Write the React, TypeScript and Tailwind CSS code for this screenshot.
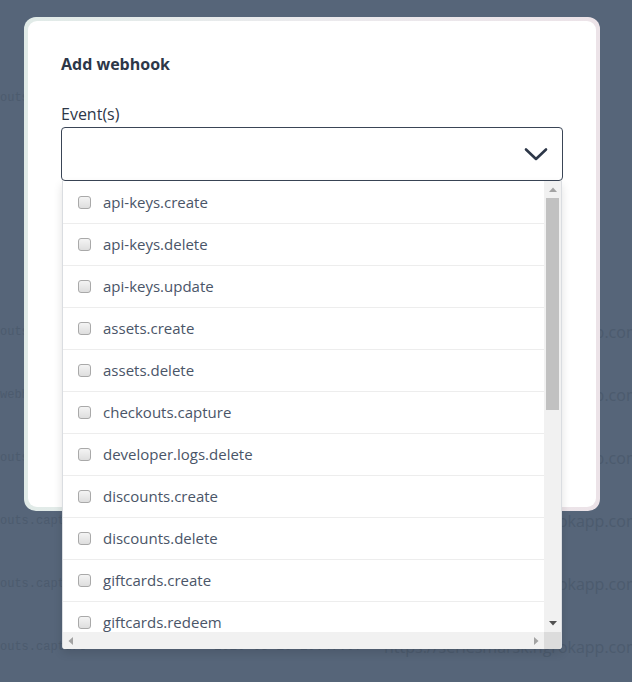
import React from "react";

const events = [
  "api-keys.create",
  "api-keys.delete",
  "api-keys.update",
  "assets.create",
  "assets.delete",
  "checkouts.capture",
  "developer.logs.delete",
  "discounts.create",
  "discounts.delete",
  "giftcards.create",
  "giftcards.redeem",
  "giftcards.update",
];

const url = "https://serlesmarsk.ngrokapp.com";

const bgRows = [
  { a: "checkouts.capture", b: "2020-05-20 10:47:07", c: "" },
  { a: "checkouts.capture", b: "2020-05-20 10:47:07", c: url },
  { a: "test.webhooks.create", b: "2020-05-20 10:47:07", c: url },
  { a: "checkouts.capture", b: "2020-05-20 10:47:07", c: url },
  { a: "checkouts.capture", b: "2020-05-20 10:47:07", c: url },
  { a: "checkouts.capture", b: "2020-05-20 10:47:07", c: url },
  { a: "checkouts.capture", b: "2020-05-20 10:47:07", c: url },
];

function BgRow({ a, b, c, className }: { a: string; b: string; c: string; className?: string }) {
  return (
    <div className={"flex h-[63px] items-center whitespace-nowrap text-[#4c5b6e] " + (className ?? "")}>
      <div className="ml-[-36px] w-[250px] shrink-0 text-[12px] font-['Liberation_Mono',monospace]">{a}</div>
      <div className="w-[170px] shrink-0 text-[13px] font-['Liberation_Mono',monospace]">{b}</div>
      <div className="min-w-0 flex-1 text-right text-[16px] font-['Open_Sans',sans-serif]">{c}</div>
    </div>
  );
}

function Checkbox() {
  return (
    <div className="h-[13px] w-[13px] shrink-0 rounded-[3px] border border-[#a9a9a9] bg-gradient-to-b from-[#f4f4f4] to-[#dedede]" />
  );
}

export default function App() {
  return (
    <div className="relative h-[682px] w-[632px] overflow-hidden bg-[#566579] font-['Open_Sans',sans-serif]">
      {/* background page */}
      <div className="pt-[66px]">
        <BgRow {...bgRows[0]} />
        <BgRow {...bgRows[1]} className="mt-[171px]" />
        {bgRows.slice(2).map((r, i) => (
          <BgRow key={i} {...r} />
        ))}
      </div>

      {/* modal */}
      <div className="absolute left-[24px] top-[17px] h-[494px] w-[576px] rounded-[12px] bg-gradient-to-r from-[#e1ebe8] via-[#ebeaed] to-[#ece3e8] p-[4px]">
        <div className="h-full w-full rounded-[9px] bg-white px-[33px] pt-[31px]">
          <div className="text-[16px] font-bold leading-[24px] text-[#2d3748]">Add webhook</div>
          <div className="mt-[26px] text-[16px] leading-[24px] text-[#2d3748]">Event(s)</div>
          <div className="relative mt-[1px]">
            <div className="flex h-[54px] items-center justify-end rounded-[4px] border border-[#3a4556] pr-[14px]">
              <svg width="24" height="15" viewBox="0 0 24 15" fill="none">
                <polyline
                  points="2,2.5 12,12 22,2.5"
                  stroke="#2d3748"
                  strokeWidth="2.6"
                  strokeLinecap="round"
                  strokeLinejoin="round"
                />
              </svg>
            </div>

            {/* dropdown */}
            <div className="absolute left-[1px] right-[1px] top-full z-10 flex h-[468px] flex-col overflow-hidden rounded-b-[3px] border-x border-[#dadde1] bg-white shadow-[0_4px_10px_rgba(0,0,0,0.12)]">
              <div className="flex min-h-0 flex-1">
                <div className="min-w-0 flex-1 overflow-hidden pt-[1px]">
                  {events.map((e) => (
                    <div
                      key={e}
                      className="flex h-[42px] items-center gap-[12px] border-b border-[#ededed] pl-[15px] text-[15px] text-[#4a5568]"
                    >
                      <Checkbox />
                      <span>{e}</span>
                    </div>
                  ))}
                </div>
                <div className="flex w-[17px] shrink-0 flex-col items-center bg-[#f1f1f1]">
                  <div className="flex h-[17px] w-full items-center justify-center">
                    <svg width="8" height="5" viewBox="0 0 8 5">
                      <polygon points="0,5 4,0.5 8,5" fill="#a3a3a3" />
                    </svg>
                  </div>
                  <div className="h-[212px] w-[13px] bg-[#c1c1c1]" />
                  <div className="flex-1" />
                  <div className="flex h-[17px] w-full items-center justify-center">
                    <svg width="8" height="5" viewBox="0 0 8 5">
                      <polygon points="0,0 8,0 4,4.5" fill="#505050" />
                    </svg>
                  </div>
                </div>
              </div>
              <div className="flex h-[17px] shrink-0">
                <div className="flex flex-1 items-center justify-between bg-[#f1f1f1] px-[5px]">
                  <svg width="5" height="8" viewBox="0 0 5 8">
                    <polygon points="5,0 5,8 0.5,4" fill="#a3a3a3" />
                  </svg>
                  <svg width="5" height="8" viewBox="0 0 5 8">
                    <polygon points="0,0 0,8 4.5,4" fill="#a3a3a3" />
                  </svg>
                </div>
                <div className="w-[17px] shrink-0 bg-[#dcdcdc]" />
              </div>
            </div>
          </div>
        </div>
      </div>
    </div>
  );
}
